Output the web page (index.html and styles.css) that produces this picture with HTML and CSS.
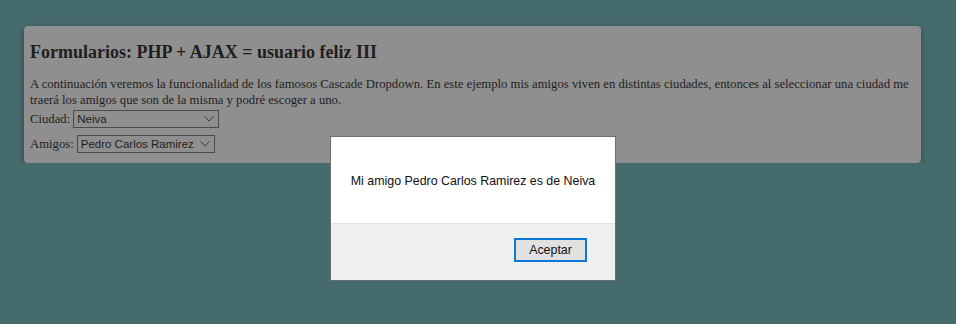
FILE: index.html
```html
<!DOCTYPE html>
<html>
<head>
<meta charset="utf-8">
<link rel="stylesheet" href="styles.css">
</head>
<body>
<!--page-->
<div class="card">
	<h2 class="title">Formularios: PHP + AJAX = usuario feliz III</h2>
	<p class="intro">A continuación veremos la funcionalidad de los famosos Cascade Dropdown. En este ejemplo mis amigos viven en distintas ciudades, entonces al seleccionar una ciudad me traerá los amigos que son de la misma y podré escoger a uno.</p>
	<div class="field">
		<span class="label">Ciudad:</span>
		<div class="select ciudad">Neiva<svg class="chev" width="10" height="6" viewBox="0 0 10 6"><path d="M0.5 0.5 L5 5 L9.5 0.5" fill="none" stroke="#3a3a3a" stroke-width="1"/></svg></div>
	</div>
	<div class="field">
		<span class="label">Amigos:</span>
		<div class="select amigos">Pedro Carlos Ramirez<svg class="chev" width="10" height="6" viewBox="0 0 10 6"><path d="M0.5 0.5 L5 5 L9.5 0.5" fill="none" stroke="#3a3a3a" stroke-width="1"/></svg></div>
	</div>
</div>

<!--alert-->
<div class="dialog">
	<div class="dialog-body">Mi amigo Pedro Carlos Ramirez es de Neiva</div>
	<div class="dialog-foot">
		<div class="btn">Aceptar</div>
	</div>
</div>
</body>
</html>
```
FILE: styles.css
```css
	body {
		margin: 0;
		padding: 26px 0 0 24px;
		background-color: #466b6d;
		font-family: "Liberation Serif", "Times New Roman", serif;
		color: #1e1e1e;
	}
	.card {
		width: 885px;
		height: 125px;
		padding: 6px;
		background-color: #8f8f8f;
		border-radius: 4px;
		box-shadow: 0 2px 6px rgba(0,0,0,0.35);
	}
	.title {
		font-size: 18px;
		margin: 10px 0 13px 0;
	}
	.intro {
		font-size: 12.7px;
		line-height: 16px;
		margin: 0 0 2px 0;
	}
	.field {
		display: flex;
		align-items: center;
		font-size: 12.7px;
		margin-bottom: 7px;
	}
	.label {
		margin-right: 3px;
	}
	.select {
		display: flex;
		align-items: center;
		justify-content: space-between;
		box-sizing: border-box;
		height: 18px;
		padding: 0 4px 0 3px;
		border: 1px solid #4a4a4a;
		font-family: "Liberation Sans", Arial, sans-serif;
		font-size: 11.5px;
		white-space: nowrap;
		color: #1e1e1e;
	}
	.ciudad {
		width: 146px;
	}
	.amigos {
		width: 138px;
	}
	.chev {
		margin-left: 6px;
		flex-shrink: 0;
	}
	.dialog {
		position: absolute;
		left: 331px;
		top: 137px;
		width: 284px;
		height: 143px;
		background-color: #f0f0f0;
		box-shadow: 0 0 0 1px #6e6e6e;
		font-family: "Liberation Sans", Arial, sans-serif;
		font-size: 12.4px;
		color: #111;
	}
	.dialog-body {
		height: 87px;
		padding-top: 2px;
		box-sizing: border-box;
		background-color: #fff;
		border-bottom: 1px solid #e2e2e2;
		display: flex;
		align-items: center;
		justify-content: center;
	}
	.dialog-foot {
		display: flex;
		justify-content: flex-end;
		padding: 14px 28px 0 0;
	}
	.btn {
		box-sizing: border-box;
		width: 73px;
		height: 24px;
		border: 2px solid #0a78d4;
		background-color: #e1e1e1;
		display: flex;
		align-items: center;
		justify-content: center;
	}
```
